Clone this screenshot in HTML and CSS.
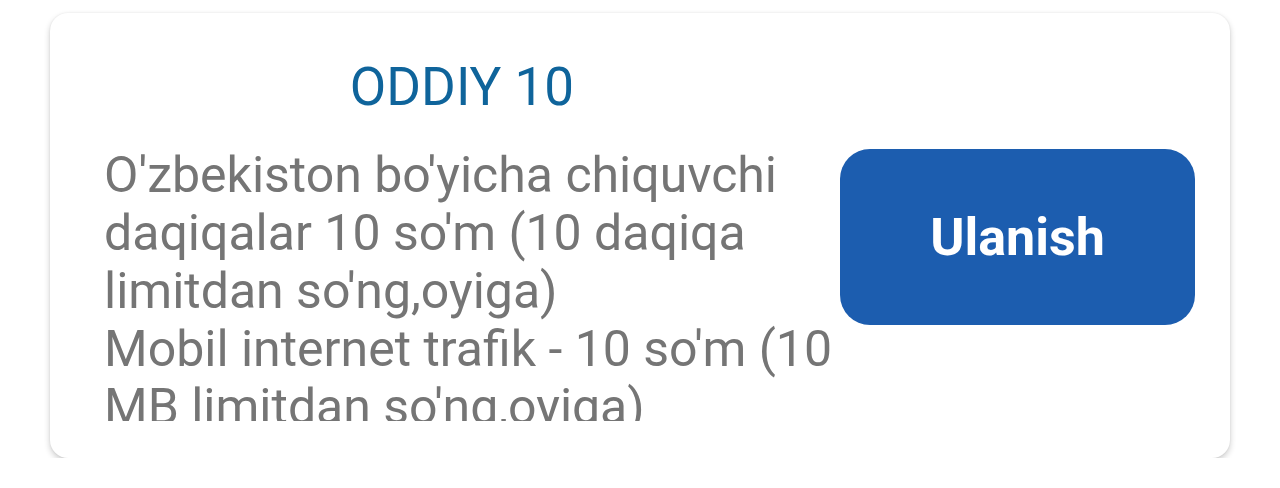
FILE: index.html
```html
<!DOCTYPE html>
<html lang="uz">
<head>
<meta charset="utf-8">
<title>ODDIY 10</title>
<link rel="stylesheet" href="styles.css">
</head>
<body>
<div class="card">
  <div class="info">
    <h2 class="title">ODDIY 10</h2>
    <p class="desc">O'zbekiston bo'yicha chiquvchi daqiqalar 10 so'm (10 daqiqa limitdan so'ng,oyiga)<br>Mobil internet trafik - 10 so'm (10 MB limitdan so'ng,oyiga)</p>
  </div>
  <div class="action">
    <button class="btn">Ulanish</button>
  </div>
</div>
</body>
</html>
```

FILE: styles.css
```css
html, body {
  margin: 0;
  padding: 0;
  background: #ffffff;
}
body {
  font-family: Roboto, "Liberation Sans", sans-serif;
  padding: 13px 0 0 50px;
}
.card {
  box-sizing: border-box;
  width: 1180px;
  height: 445px;
  background: #ffffff;
  border-radius: 18px;
  box-shadow: 0 3px 6px rgba(0, 0, 0, 0.2), 0 0 2px rgba(0, 0, 0, 0.08);
  display: flex;
  align-items: center;
  padding: 43px 35px 37px 54px;
}
.info {
  width: 734px;
  align-self: stretch;
  display: flex;
  flex-direction: column;
}
.title {
  margin: 0;
  font-weight: 400;
  font-size: 53px;
  line-height: 62px;
  color: #0f649b;
  text-align: center;
  padding-right: 18px;
}
.desc {
  margin: 28px 0 0 0;
  font-size: 50px;
  line-height: 58px;
  color: #757575;
  height: 275px;
  overflow: hidden;
}
.action {
  margin-left: auto;
  display: flex;
}
.btn {
  width: 355px;
  height: 176px;
  border: none;
  border-radius: 30px;
  background: #1c5daf;
  color: #ffffff;
  font-family: Roboto, "Liberation Sans", sans-serif;
  font-weight: 700;
  font-size: 52px;
  padding: 0;
  margin-top: -3px;
}
```
